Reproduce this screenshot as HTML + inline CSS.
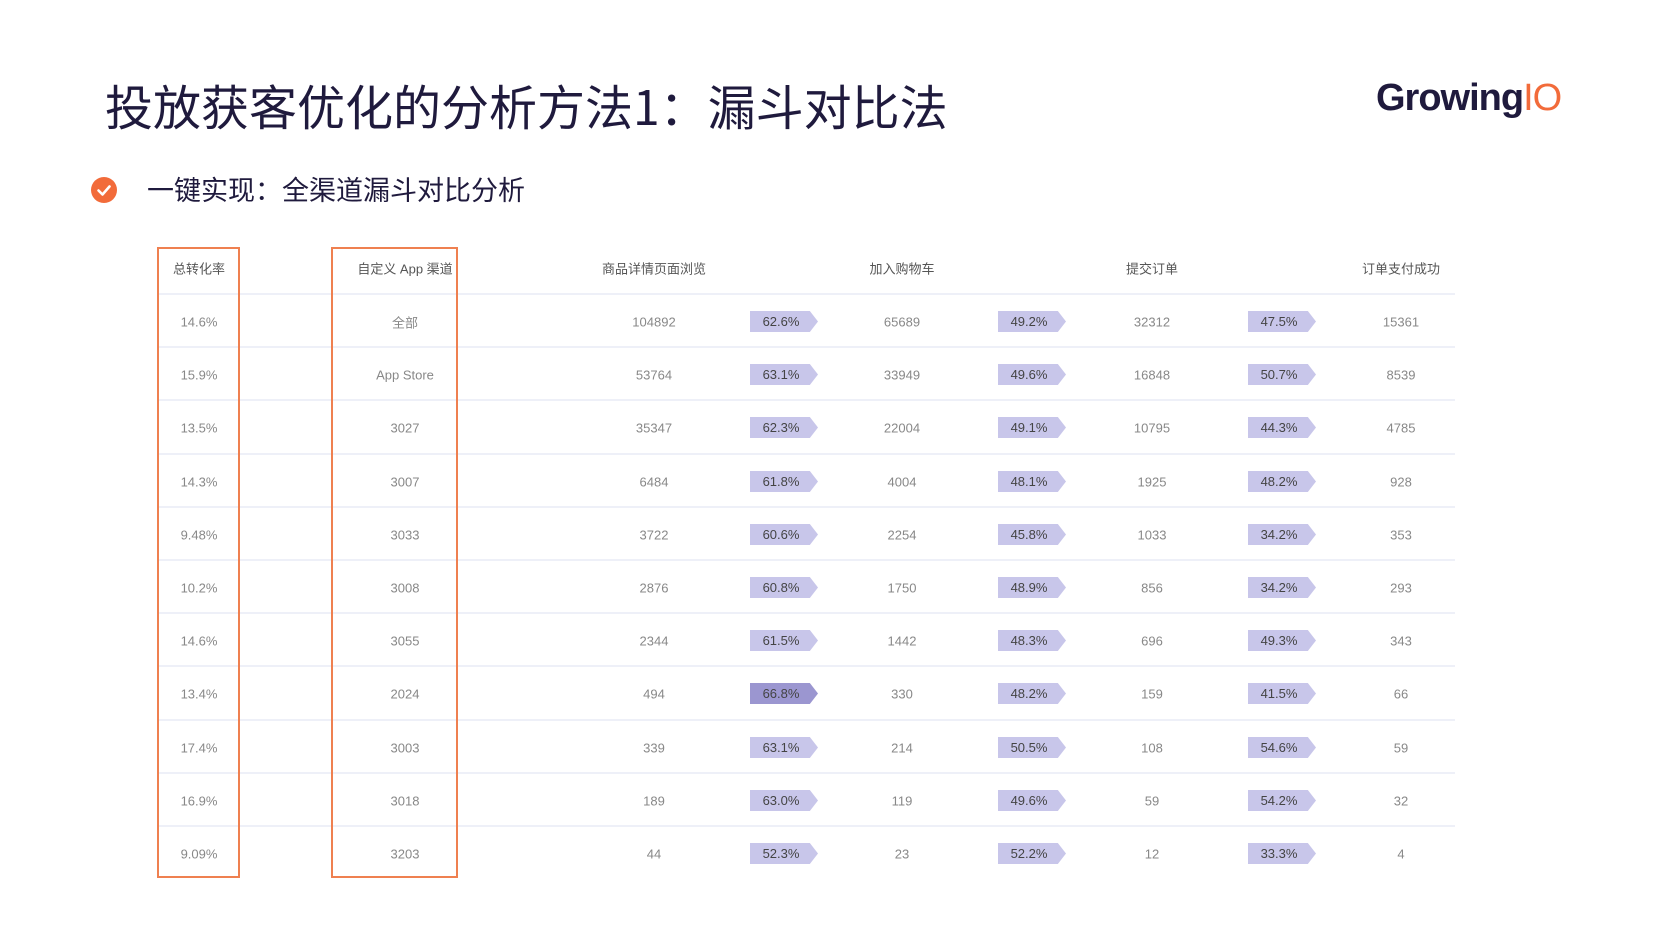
<!DOCTYPE html>
<html><head><meta charset="utf-8"><style>
body{margin:0;width:1653px;height:929px;background:#fff;position:relative;overflow:hidden;font-family:"Liberation Sans","Noto Sans CJK SC",sans-serif}
.t{position:absolute;left:105px;top:69px;font-size:48px;color:#1f1a3d;white-space:nowrap;font-family:"Noto Sans CJK SC",sans-serif}
.logo{position:absolute;left:1376px;top:77px;font-size:38px;font-weight:bold;color:#1f1a3d;letter-spacing:-1px}
.logo span{color:#f26b3a;font-weight:normal}
.chk{position:absolute;left:91px;top:177px;width:26px;height:26px;border-radius:50%;background:#f26b3a}
.sub{position:absolute;left:147px;top:169px;font-size:27px;color:#1f1a3d;font-family:"Noto Sans CJK SC",sans-serif}
.hdr,.row{position:absolute;left:157px;width:1298px;height:53px}
.row{border-top:2px solid #eef0f8}
.c{position:absolute;width:140px;margin-left:-70px;text-align:center;font-size:13px;color:#888;top:50%;transform:translateY(-50%);font-family:"Liberation Sans","Noto Sans CJK SC",sans-serif}
.hdr .c{color:#555;font-size:13px}
.b{position:absolute;width:62px;height:21px;margin-left:-34px;top:16px;background:#c8c6ea;color:#444;font-size:13px;line-height:21px;text-align:center;padding-right:6px;box-sizing:content-box;clip-path:polygon(0 0,88% 0,100% 50%,88% 100%,0 100%)}
.b.d{background:#9b96d0}
.box{position:absolute;border:2px solid #ef8050;top:247px;height:627px}
</style></head><body>
<div class="t">投放获客优化的分析方法1：漏斗对比法</div>
<div class="logo">Growing<span>IO</span></div>
<div class="chk"><svg width="26" height="26"><path d="M7.5 13.5l4 4 7-8" stroke="#fff" stroke-width="2.6" fill="none" stroke-linecap="round" stroke-linejoin="round"/></svg></div>
<div class="sub">一键实现：全渠道漏斗对比分析</div>

<div class="hdr" style="top:241px"><div class="c" style="left:42px">总转化率</div><div class="c" style="left:248px">自定义 App 渠道</div><div class="c" style="left:497px">商品详情页面浏览</div><div class="c" style="left:745px">加入购物车</div><div class="c" style="left:995px">提交订单</div><div class="c" style="left:1244px">订单支付成功</div></div>

<div class="row" style="top:293px"><div class="c" style="left:42px">14.6%</div><div class="c" style="left:248px">全部</div><div class="c" style="left:497px">104892</div><div class="b" style="left:627px">62.6%</div><div class="c" style="left:745px">65689</div><div class="b" style="left:875px">49.2%</div><div class="c" style="left:995px">32312</div><div class="b" style="left:1125px">47.5%</div><div class="c" style="left:1244px">15361</div></div>
<div class="row" style="top:346px"><div class="c" style="left:42px">15.9%</div><div class="c" style="left:248px">App Store</div><div class="c" style="left:497px">53764</div><div class="b" style="left:627px">63.1%</div><div class="c" style="left:745px">33949</div><div class="b" style="left:875px">49.6%</div><div class="c" style="left:995px">16848</div><div class="b" style="left:1125px">50.7%</div><div class="c" style="left:1244px">8539</div></div>
<div class="row" style="top:399px"><div class="c" style="left:42px">13.5%</div><div class="c" style="left:248px">3027</div><div class="c" style="left:497px">35347</div><div class="b" style="left:627px">62.3%</div><div class="c" style="left:745px">22004</div><div class="b" style="left:875px">49.1%</div><div class="c" style="left:995px">10795</div><div class="b" style="left:1125px">44.3%</div><div class="c" style="left:1244px">4785</div></div>
<div class="row" style="top:453px"><div class="c" style="left:42px">14.3%</div><div class="c" style="left:248px">3007</div><div class="c" style="left:497px">6484</div><div class="b" style="left:627px">61.8%</div><div class="c" style="left:745px">4004</div><div class="b" style="left:875px">48.1%</div><div class="c" style="left:995px">1925</div><div class="b" style="left:1125px">48.2%</div><div class="c" style="left:1244px">928</div></div>
<div class="row" style="top:506px"><div class="c" style="left:42px">9.48%</div><div class="c" style="left:248px">3033</div><div class="c" style="left:497px">3722</div><div class="b" style="left:627px">60.6%</div><div class="c" style="left:745px">2254</div><div class="b" style="left:875px">45.8%</div><div class="c" style="left:995px">1033</div><div class="b" style="left:1125px">34.2%</div><div class="c" style="left:1244px">353</div></div>
<div class="row" style="top:559px"><div class="c" style="left:42px">10.2%</div><div class="c" style="left:248px">3008</div><div class="c" style="left:497px">2876</div><div class="b" style="left:627px">60.8%</div><div class="c" style="left:745px">1750</div><div class="b" style="left:875px">48.9%</div><div class="c" style="left:995px">856</div><div class="b" style="left:1125px">34.2%</div><div class="c" style="left:1244px">293</div></div>
<div class="row" style="top:612px"><div class="c" style="left:42px">14.6%</div><div class="c" style="left:248px">3055</div><div class="c" style="left:497px">2344</div><div class="b" style="left:627px">61.5%</div><div class="c" style="left:745px">1442</div><div class="b" style="left:875px">48.3%</div><div class="c" style="left:995px">696</div><div class="b" style="left:1125px">49.3%</div><div class="c" style="left:1244px">343</div></div>
<div class="row" style="top:665px"><div class="c" style="left:42px">13.4%</div><div class="c" style="left:248px">2024</div><div class="c" style="left:497px">494</div><div class="b d" style="left:627px">66.8%</div><div class="c" style="left:745px">330</div><div class="b" style="left:875px">48.2%</div><div class="c" style="left:995px">159</div><div class="b" style="left:1125px">41.5%</div><div class="c" style="left:1244px">66</div></div>
<div class="row" style="top:719px"><div class="c" style="left:42px">17.4%</div><div class="c" style="left:248px">3003</div><div class="c" style="left:497px">339</div><div class="b" style="left:627px">63.1%</div><div class="c" style="left:745px">214</div><div class="b" style="left:875px">50.5%</div><div class="c" style="left:995px">108</div><div class="b" style="left:1125px">54.6%</div><div class="c" style="left:1244px">59</div></div>
<div class="row" style="top:772px"><div class="c" style="left:42px">16.9%</div><div class="c" style="left:248px">3018</div><div class="c" style="left:497px">189</div><div class="b" style="left:627px">63.0%</div><div class="c" style="left:745px">119</div><div class="b" style="left:875px">49.6%</div><div class="c" style="left:995px">59</div><div class="b" style="left:1125px">54.2%</div><div class="c" style="left:1244px">32</div></div>
<div class="row" style="top:825px"><div class="c" style="left:42px">9.09%</div><div class="c" style="left:248px">3203</div><div class="c" style="left:497px">44</div><div class="b" style="left:627px">52.3%</div><div class="c" style="left:745px">23</div><div class="b" style="left:875px">52.2%</div><div class="c" style="left:995px">12</div><div class="b" style="left:1125px">33.3%</div><div class="c" style="left:1244px">4</div></div>

<div class="box" style="left:157px;width:79px"></div>
<div class="box" style="left:331px;width:123px"></div>
</body></html>
